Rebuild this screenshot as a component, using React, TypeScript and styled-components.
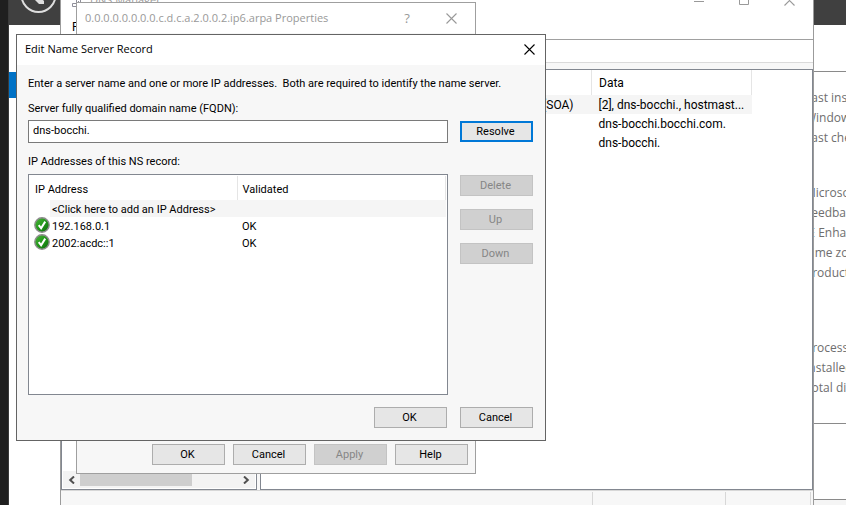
import React from 'react';
import styled, { createGlobalStyle } from 'styled-components';

const uiFont = 'Roboto, "Liberation Sans", sans-serif';
const captionFont = '"Open Sans", "Noto Sans", sans-serif';

const GlobalStyle = createGlobalStyle`
  * { box-sizing: border-box; }
  body { margin: 0; overflow: hidden; }
  button, input { font: inherit; color: inherit; }
`;

const Desktop = styled.main`
  position: relative;
  min-height: 100vh;
  display: flex;
  overflow: hidden;
  background: #fff;
  font: 11px/16px ${uiFont};
  color: #000;
`;

/* Server Manager, behind everything */
const ScreenEdge = styled.div`
  width: 9px;
  background: #1f1f1f;
  border-right: 1px solid #3a3a3a;
`;

const ServerManager = styled.section`
  flex: 1;
  min-width: 0;
  display: flex;
  flex-direction: column;
`;

const ManagerHeader = styled.header`
  height: 25px;
  background: #404040;
`;

const ManagerBody = styled.div`
  flex: 1;
  display: flex;
  justify-content: space-between;
`;

const NavSelection = styled.div`
  width: 40px;
  height: 26px;
  margin-top: 47px;
  background: #0072c6;
`;

const Tiles = styled.div`
  width: 46px;
  padding-top: 46px;
  display: flex;
  flex-direction: column;
  gap: 75px;
  overflow: hidden;
  font: 12px/20px ${captionFont};
  color: #6e6e6e;
  white-space: nowrap;
`;

const Tile = styled.div`
  height: 353px;
  padding: 16px 0 0 5px;
  border: solid #8a8a8a;
  border-width: 1px 0;
  display: flex;
  flex-direction: column;
  gap: 35px;
`;

const TileGroup = styled.div<{ $last?: boolean }>`
  display: flex;
  flex-direction: column;
  margin-top: ${p => (p.$last ? 20 : 0)}px;
`;

const LowerTile = styled.div`
  flex: 1;
  border-top: 1px solid #8a8a8a;
  background: #f5f5f5;
`;

/* Windows */
const Window = styled.section<{ $edge: string }>`
  position: absolute;
  display: flex;
  flex-direction: column;
  border: 1px solid ${p => p.$edge};
  background: #f7f7f7;
`;

const ConsoleWindow = styled(Window)`
  top: -16px;
  left: 60px;
  right: 32px;
  bottom: -20px;
`;

const PropertiesWindow = styled(Window)`
  top: 2px;
  left: 76px;
  width: 400px;
  height: 472px;
  justify-content: space-between;
`;

const RecordWindow = styled(Window)`
  top: 34px;
  left: 16px;
  width: 530px;
`;

const TitleBar = styled.header<{ $inactive?: boolean }>`
  display: flex;
  align-items: center;
  height: 30px;
  padding: 0 10px 2px 8px;
  background: #fff;
  color: ${p => (p.$inactive ? '#999' : '#000')};
  font: 11px/16px ${captionFont};
`;

const ConsoleTitleBar = styled(TitleBar)`
  padding: 0 1px 0 11px;
`;

const PropertiesTitleBar = styled(TitleBar)`
  padding: 0 18px 0 8px;
`;

const Caption = styled.h1`
  flex: 1;
  margin: 0;
  font: inherit;
  white-space: pre;
`;

const CaptionIcon = styled.span`
  display: flex;
  margin-right: 8px;
`;

const CaptionButton = styled.button<{ $wide?: boolean }>`
  display: grid;
  place-items: center;
  width: ${p => (p.$wide ? 45 : 11)}px;
  height: 28px;
  padding: 0;
  border: 0;
  background: none;
`;

const HelpButton = styled(CaptionButton)`
  width: 12px;
  margin-right: 33px;
  font-size: 13px;
`;

/* DNS console */
const MenuBar = styled.nav`
  height: 25px;
  padding: 4px 11px;
  background: #fff;
  font-size: 12px;
  border-bottom: 1px solid #a0a0a0;
`;

const ConsoleToolbar = styled.div`
  height: 23px;
  background: #fff;
  border-bottom: 1px solid #dadada;
`;

const Panes = styled.div`
  height: 421px;
  margin-top: 6px;
  display: flex;
  gap: 3px;
`;

const TreePane = styled.div`
  width: 196px;
  display: flex;
  flex-direction: column;
  justify-content: flex-end;
  padding: 1px;
  border: 1px solid #828790;
  background: #fff;
`;

const ScrollBar = styled.div`
  display: flex;
  height: 17px;
  background: #f3f3f3;
`;

const ScrollButton = styled.button`
  display: grid;
  place-items: center;
  width: 17px;
  padding: 0;
  border: 0;
  background: none;
`;

const ScrollTrack = styled.div`
  flex: 1;
  display: flex;
`;

const ScrollThumb = styled.div`
  width: 112px;
  height: 15px;
  background: #cecece;
`;

const RecordPane = styled.div`
  flex: 1;
  min-width: 0;
  border: 1px solid #828790;
  background: #fff;
`;

const DataTable = styled.table`
  width: 491px;
  table-layout: fixed;
  border-collapse: collapse;
  font-size: 12px;
  th, td {
    height: 19px;
    padding: 0 0 0 7px;
    font-weight: 400;
    text-align: left;
    white-space: nowrap;
  }
  th { height: 25px; border-right: 1px solid #e5e5e5; }
`;

const StatusBar = styled.footer`
  flex: 1;
  display: flex;
  justify-content: flex-end;
  border-top: 1px solid #d7d7d7;
  padding-right: 2px;
`;

const StatusCell = styled.div<{ $width: number }>`
  width: ${p => p.$width}px;
  margin-top: 1px;
  border-right: 1px solid #d7d7d7;
`;

/* Dialog parts */
const PushButton = styled.button<{ $default?: boolean }>`
  width: 73px;
  height: 21px;
  padding: 0 2px 0 0;
  border: ${p => (p.$default ? '2px solid #0078d7' : '1px solid #adadad')};
  background: #e6e6e6;
  line-height: 16px;
  &:disabled {
    border-color: #c3c3c3;
    background: #d0d0d0;
    color: #868686;
  }
`;

const SheetButtons = styled.footer`
  display: flex;
  justify-content: flex-end;
  gap: 8px;
  padding: 0 7px 8px;
`;

const DialogBody = styled.form`
  display: grid;
  grid-template-columns: 1fr 73px;
  column-gap: 12px;
  padding: 11px 12px 12px 11px;
`;

const Intro = styled.p`
  grid-column: 1 / -1;
  margin: 0 0 9px;
  white-space: pre-wrap;
`;

const FieldLabel = styled.label`
  grid-column: 1 / -1;
  margin-bottom: 3px;
`;

const TextBox = styled.input`
  width: 100%;
  height: 23px;
  margin-bottom: 11px;
  padding: 0 4px 2px;
  border: 1px solid #7a7a7a;
  border-radius: 0;
  background: #fff;
  outline: 0;
`;

const ResolveButton = styled(PushButton)`
  margin-top: 1px;
`;

const ListHeading = styled.h2`
  grid-column: 1 / -1;
  margin: 0 0 4px;
  font: inherit;
`;

const AddressList = styled.div`
  height: 221px;
  padding: 1px;
  border: 1px solid #828790;
  background: #fff;
`;

const AddressTable = styled.table`
  width: 100%;
  table-layout: fixed;
  border-collapse: collapse;
  th, td {
    height: 17px;
    padding: 2px 0 0 5px;
    font-weight: 400;
    line-height: 15px;
    text-align: left;
  }
  th { height: 24px; border-right: 1px solid #e5e5e5; }
`;

const Col = styled.col<{ $width?: number }>`
  width: ${p => (p.$width ? `${p.$width}px` : 'auto')};
`;

const Shaded = styled.td`
  background: #f5f5f5;
`;

const AddressLine = styled.div`
  display: grid;
  grid-template-columns: 15px 1fr;
  height: 17px;
  margin-top: -2px;
  white-space: nowrap;
`;

const AddressText = styled.span<{ $shaded?: boolean }>`
  height: 17px;
  padding-left: 2px;
  line-height: 19px;
  background: ${p => (p.$shaded ? '#f5f5f5' : 'transparent')};
`;

const SideButtons = styled.div`
  display: flex;
  flex-direction: column;
  gap: 13px;
  padding-top: 1px;
`;

const DialogButtons = styled.footer`
  grid-column: 1 / -1;
  display: flex;
  justify-content: flex-end;
  gap: 13px;
  margin-top: 12px;
`;

const StatusIcon = styled.svg`
  display: block;
  width: 16px;
  height: 16px;
  margin-left: -1px;
`;

const Cross = () => (
  <svg width="11" height="11" viewBox="0 0 11 11" fill="none" stroke="currentColor" strokeWidth="1.1">
    <path d="M.5.5l10 10M10.5.5l-10 10" />
  </svg>
);

const BackIcon = () => (
  <svg width="60" height="25" viewBox="0 0 60 25" fill="none">
    <circle cx="29.5" cy="-5" r="17" stroke="#dedede" strokeWidth="2" />
    <path d="M22-4l4-4 9 9v3h-5z" fill="#dedede" />
  </svg>
);

const ServerIcon = () => (
  <svg width="10" height="16" viewBox="0 0 10 16" fill="none" stroke="#8f8f9a">
    <path d="M4.5 1.5h4v10h-4zM5 4.5h3M5 7.5h3M.5 11.5h4v3h-4zM6 9.5h1M6.5 13v2" />
  </svg>
);

const Chevron = ({ right }: { right?: boolean }) => (
  <svg width="7" height="8" viewBox="0 0 7 8" fill="none" stroke="#505050" strokeWidth="2">
    <path d={right ? 'M1 .5L4.8 4 1 7.5' : 'M6 .5L2.2 4 6 7.5'} />
  </svg>
);

const Check = () => (
  <StatusIcon viewBox="0 0 16 16" role="img" aria-label="Validated">
    <defs>
      <linearGradient id="okFill" x1="0" y1="0" x2="1" y2="1">
        <stop offset="0" stopColor="#4fb83c" />
        <stop offset=".5" stopColor="#22961a" />
        <stop offset="1" stopColor="#0c6b0c" />
      </linearGradient>
    </defs>
    <circle cx="8" cy="8" r="7.2" fill="url(#okFill)" stroke="#8d8d8d" strokeWidth="1.4" />
    <path d="M4.7 8.2l2.4 3L11.2 4.6" fill="none" stroke="#fff" strokeWidth="2" />
  </StatusIcon>
);

const properties = [
  ['Last installed updates', 'Windows Update', 'Last checked for updates'],
  ['Microsoft Defender', 'Feedback & Diagnostics', 'IE Enhanced Security', 'Time zone', 'Product ID'],
  ['Processors', 'Installed memory', 'Total disk space'],
];

const addresses = [
  { ip: '192.168.0.1', state: 'OK' },
  { ip: '2002:acdc::1', state: 'OK' },
];

export default function App() {
  return (
    <>
      <GlobalStyle />
      <Desktop>
        <ScreenEdge />
        <ServerManager aria-label="Server Manager">
          <ManagerHeader><BackIcon /></ManagerHeader>
          <ManagerBody>
            <NavSelection />
            <Tiles>
              <Tile>
                {properties.map((group, i) => (
                  <TileGroup key={group[0]} $last={i === 2}>
                    {group.map(name => <span key={name}>{name}</span>)}
                  </TileGroup>
                ))}
              </Tile>
              <LowerTile />
            </Tiles>
          </ManagerBody>
        </ServerManager>

        <ConsoleWindow $edge="#9b9b9b" aria-label="DNS Manager">
          <ConsoleTitleBar $inactive>
            <CaptionIcon><ServerIcon /></CaptionIcon>
            <Caption>DNS Manager</Caption>
            <CaptionButton $wide aria-label="Minimize">
              <svg width="11" height="11" stroke="currentColor"><path d="M0 6.5h10" /></svg>
            </CaptionButton>
            <CaptionButton $wide aria-label="Maximize">
              <svg width="11" height="11" fill="none" stroke="currentColor"><path d="M.5.5h9v9h-9z" /></svg>
            </CaptionButton>
            <CaptionButton $wide aria-label="Close"><Cross /></CaptionButton>
          </ConsoleTitleBar>
          <MenuBar>File</MenuBar>
          <ConsoleToolbar />
          <Panes>
            <TreePane>
              <ScrollBar>
                <ScrollButton aria-label="Scroll left"><Chevron /></ScrollButton>
                <ScrollTrack><ScrollThumb /></ScrollTrack>
                <ScrollButton aria-label="Scroll right"><Chevron right /></ScrollButton>
              </ScrollBar>
            </TreePane>
            <RecordPane>
              <DataTable>
                <colgroup><Col $width={180} /><Col /><Col $width={160} /></colgroup>
                <thead><tr><th>Name</th><th>Type</th><th>Data</th></tr></thead>
                <tbody>
                  <tr>
                    <Shaded /><Shaded>Start of Authority (SOA)</Shaded>
                    <Shaded>[2], dns-bocchi., hostmast...</Shaded>
                  </tr>
                  <tr><td /><td /><td>dns-bocchi.bocchi.com.</td></tr>
                  <tr><td /><td /><td>dns-bocchi.</td></tr>
                </tbody>
              </DataTable>
            </RecordPane>
          </Panes>
          <StatusBar>
            <StatusCell $width={133} />
            <StatusCell $width={133} />
            <StatusCell $width={85} />
          </StatusBar>
        </ConsoleWindow>

        <PropertiesWindow $edge="#9f9f9f" role="dialog" aria-label="Zone properties">
          <PropertiesTitleBar $inactive>
            <Caption>0.0.0.0.0.0.0.0.c.d.c.a.2.0.0.2.ip6.arpa Properties</Caption>
            <HelpButton aria-label="Help">?</HelpButton>
            <CaptionButton aria-label="Close"><Cross /></CaptionButton>
          </PropertiesTitleBar>
          <SheetButtons>
            <PushButton>OK</PushButton>
            <PushButton>Cancel</PushButton>
            <PushButton disabled>Apply</PushButton>
            <PushButton>Help</PushButton>
          </SheetButtons>
        </PropertiesWindow>

        <RecordWindow $edge="#646464" role="dialog" aria-label="Edit Name Server Record">
          <TitleBar>
            <Caption>Edit Name Server Record</Caption>
            <CaptionButton aria-label="Close"><Cross /></CaptionButton>
          </TitleBar>
          <DialogBody onSubmit={e => e.preventDefault()}>
            <Intro>{'Enter a server name and one or more IP addresses.  Both are required to identify the name server.'}</Intro>
            <FieldLabel htmlFor="fqdn">Server fully qualified domain name (FQDN):</FieldLabel>
            <TextBox id="fqdn" defaultValue="dns-bocchi." />
            <ResolveButton type="button" $default>Resolve</ResolveButton>
            <ListHeading id="addresses">IP Addresses of this NS record:</ListHeading>
            <AddressList>
              <AddressTable aria-labelledby="addresses">
                <colgroup><Col $width={207} /><Col /></colgroup>
                <thead><tr><th>IP Address</th><th>Validated</th></tr></thead>
                <tbody>
                  <tr>
                    <td><AddressLine><span /><AddressText $shaded>&lt;Click here to add an IP Address&gt;</AddressText></AddressLine></td>
                    <Shaded />
                  </tr>
                  {addresses.map(a => (
                    <tr key={a.ip}>
                      <td><AddressLine><Check /><AddressText>{a.ip}</AddressText></AddressLine></td>
                      <td>{a.state}</td>
                    </tr>
                  ))}
                </tbody>
              </AddressTable>
            </AddressList>
            <SideButtons>
              <PushButton type="button" disabled>Delete</PushButton>
              <PushButton type="button" disabled>Up</PushButton>
              <PushButton type="button" disabled>Down</PushButton>
            </SideButtons>
            <DialogButtons>
              <PushButton type="submit">OK</PushButton>
              <PushButton type="button">Cancel</PushButton>
            </DialogButtons>
          </DialogBody>
        </RecordWindow>
      </Desktop>
    </>
  );
}
